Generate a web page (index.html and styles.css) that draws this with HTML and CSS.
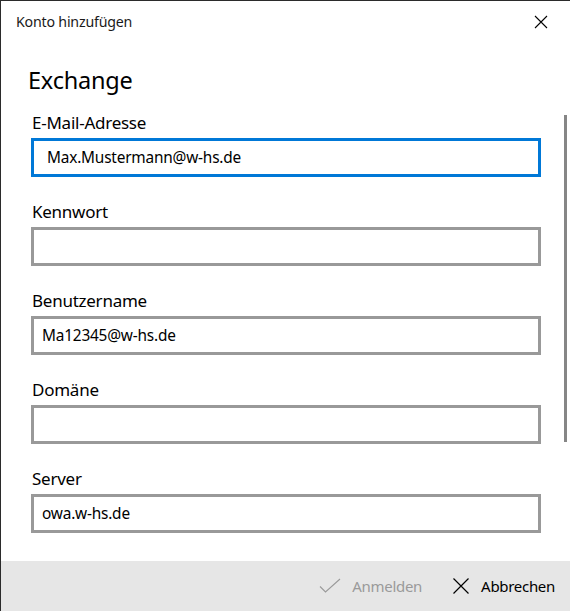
FILE: index.html
```html
<!DOCTYPE html>
<html lang="de">
<head>
<meta charset="utf-8">
<title>Konto hinzufügen</title>
<link rel="stylesheet" href="styles.css">
</head>
<body>
<div class="window">
  <div class="titlebar">
    <span class="title">Konto hinzufügen</span>
    <span class="close">
      <svg width="14" height="14" viewBox="0 0 14 14"><path d="M1 1L13 13M13 1L1 13" stroke="#000" stroke-width="1.1" fill="none"/></svg>
    </span>
  </div>
  <div class="content">
    <div class="form">
      <div class="heading">Exchange</div>
      <div class="field">
        <div class="label">E-Mail-Adresse</div>
        <div class="input focused">Max.Mustermann@w-hs.de</div>
      </div>
      <div class="field">
        <div class="label">Kennwort</div>
        <div class="input"></div>
      </div>
      <div class="field">
        <div class="label">Benutzername</div>
        <div class="input">Ma12345@w-hs.de</div>
      </div>
      <div class="field">
        <div class="label">Domäne</div>
        <div class="input"></div>
      </div>
      <div class="field">
        <div class="label">Server</div>
        <div class="input">owa.w-hs.de</div>
      </div>
    </div>
    <div class="scrolltrack"><div class="thumb"></div></div>
  </div>
  <div class="footer">
    <div class="btn disabled">
      <svg width="22" height="16" viewBox="0 0 22 16"><path d="M1 8.5L6.5 14L21 1" stroke="#9a9a9a" stroke-width="1.1" fill="none"/></svg>
      <span>Anmelden</span>
    </div>
    <div class="btn">
      <svg width="18" height="18" viewBox="0 0 18 18"><path d="M1.5 1.5L16.5 16.5M16.5 1.5L1.5 16.5" stroke="#000" stroke-width="1.2" fill="none"/></svg>
      <span>Abbrechen</span>
    </div>
  </div>
</div>
</body>
</html>
```
FILE: styles.css
```css
html, body {
  margin: 0;
  padding: 0;
  background: #fff;
}
body {
  font-family: "Noto Sans", "Open Sans", sans-serif;
  color: #000;
}
.window {
  width: 570px;
  height: 611px;
  box-sizing: border-box;
  border-left: 1px solid #2b2b2b;
  border-top: 1px solid #2b2b2b;
  display: flex;
  flex-direction: column;
  overflow: hidden;
}
.titlebar {
  height: 41px;
  display: flex;
  align-items: center;
  justify-content: space-between;
  padding: 0 22px 0 15px;
  flex: none;
}
.title {
  font-size: 14.2px;
  letter-spacing: -0.2px;
  color: #1a1a1a;
}
.close {
  display: flex;
}
.content {
  flex: 1;
  display: flex;
  min-height: 0;
}
.form {
  flex: 1;
  padding: 22px 0 0 30px;
}
.heading {
  font-size: 23.5px;
  line-height: 32px;
  letter-spacing: -0.2px;
  margin-bottom: 15px;
  margin-left: -3px;
}
.field {
  margin-bottom: 23px;
}
.label {
  font-size: 17px;
  line-height: 24px;
  letter-spacing: -0.25px;
  padding-left: 1px;
}
.input {
  margin-top: 3px;
  width: 510px;
  height: 39px;
  box-sizing: border-box;
  border: 3px solid #999;
  display: flex;
  align-items: center;
  padding-left: 8px;
  font-size: 15.4px;
  letter-spacing: -0.2px;
}
.input.focused {
  border-color: #0078d7;
  padding-left: 13px;
}
.scrolltrack {
  width: 6px;
  flex: none;
  padding-top: 73px;
}
.thumb {
  width: 3px;
  height: 327px;
  background: #868686;
}
.footer {
  height: 50px;
  flex: none;
  background: #e6e6e6;
  display: flex;
  justify-content: flex-end;
  align-items: center;
  padding-right: 15px;
  gap: 30px;
}
.btn {
  display: flex;
  align-items: center;
  gap: 11px;
  font-size: 15px;
  letter-spacing: -0.3px;
}
.btn.disabled {
  color: #9a9a9a;
}
```
